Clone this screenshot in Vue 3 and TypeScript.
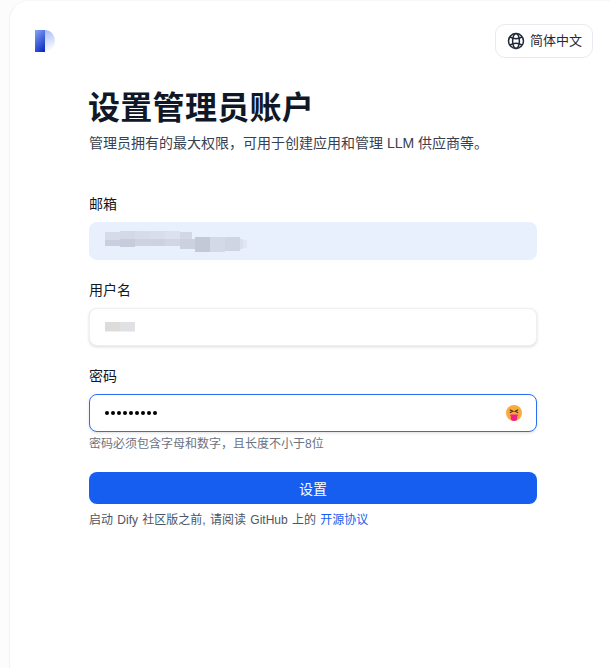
<script setup lang="ts">
interface Block {
  x: number
  y: number
  w: number
  h: number
  c: string
}

const emailBlur: Block[] = [
  { x: 0, y: 2, w: 15, h: 8, c: '#d5dbe9' },
  { x: 0, y: 10, w: 15, h: 6, c: '#c9cfde' },
  { x: 15, y: 1, w: 15, h: 8, c: '#d3d9e7' },
  { x: 15, y: 9, w: 15, h: 8, c: '#c6ccdb' },
  { x: 30, y: 1, w: 15, h: 8, c: '#d6dce9' },
  { x: 30, y: 9, w: 15, h: 7, c: '#cdd3e1' },
  { x: 45, y: 1, w: 15, h: 8, c: '#d8deeb' },
  { x: 45, y: 9, w: 15, h: 7, c: '#ccd2e0' },
  { x: 60, y: 1, w: 15, h: 8, c: '#dbe1ee' },
  { x: 60, y: 9, w: 15, h: 7, c: '#d0d6e4' },
  { x: 75, y: 2, w: 12, h: 7, c: '#d2d8e6' },
  { x: 75, y: 9, w: 15, h: 10, c: '#cbd1df' },
  { x: 90, y: 7, w: 15, h: 15, c: '#c4c9d9' },
  { x: 105, y: 7, w: 15, h: 15, c: '#d3d9e7' },
  { x: 120, y: 7, w: 15, h: 14, c: '#cfd5e3' },
  { x: 135, y: 9, w: 3, h: 10, c: '#d9dfec' },
  { x: 138, y: 10, w: 4, h: 8, c: '#e0e6f3' }
]

const nameBlur: Block[] = [
  { x: 0, y: 0, w: 15, h: 9, c: '#dedcdb' },
  { x: 15, y: 0, w: 15, h: 9, c: '#e0e1e4' },
  { x: 0, y: 9, w: 30, h: 1, c: '#f0f0f0' }
]
</script>

<template>
  <div class="page">
    <div class="card">
      <header class="top">
        <svg class="logo" width="21" height="22" viewBox="0 0 21 22" aria-label="logo">
          <defs>
            <linearGradient id="logo-dark" x1="0.2" y1="0" x2="0.7" y2="1">
              <stop offset="0" stop-color="#7e9df2" />
              <stop offset="1" stop-color="#0f2fc4" />
            </linearGradient>
            <linearGradient id="logo-light" x1="0.3" y1="0" x2="0.7" y2="1">
              <stop offset="0" stop-color="#9db5f6" />
              <stop offset="1" stop-color="#ffffff" />
            </linearGradient>
          </defs>
          <path d="M0 0h10a10 11 0 0 1 0 22H0z" fill="url(#logo-light)" />
          <rect width="10" height="22" fill="url(#logo-dark)" />
        </svg>
        <button class="lang" type="button">
          <svg width="18" height="18" viewBox="0 0 18 18" fill="none" stroke="#1f2937" stroke-width="1.5">
            <circle cx="9" cy="9" r="7.500" />
            <ellipse cx="9" cy="9" rx="3.400" ry="7.500" />
            <path d="M3 5c3.500 2 8.500 2 12 0M3 13c3.500-2 8.500-2 12 0" />
          </svg>
          <span>简体中文</span>
        </button>
      </header>

      <main class="content">
        <h1>设置管理员账户</h1>
        <p class="sub">管理员拥有的最大权限，可用于创建应用和管理 LLM 供应商等。</p>

        <form class="form" @submit.prevent>
          <div class="field">
            <label>邮箱</label>
            <div class="input filled">
              <svg width="148" height="22" viewBox="0 0 148 22">
                <rect v-for="(b, i) in emailBlur" :key="i" :x="b.x" :y="b.y" :width="b.w" :height="b.h" :fill="b.c" />
              </svg>
            </div>
          </div>

          <div class="field">
            <label>用户名</label>
            <div class="input raised">
              <svg width="30" height="10" viewBox="0 0 30 10">
                <rect v-for="(b, i) in nameBlur" :key="i" :x="b.x" :y="b.y" :width="b.w" :height="b.h" :fill="b.c" />
              </svg>
            </div>
          </div>

          <div class="field">
            <label>密码</label>
            <div class="input focused">
              <span class="dots">
                <i v-for="n in 9" :key="n"></i>
              </span>
              <svg class="emoji" width="18" height="18" viewBox="0 0 18 18">
                <circle cx="9" cy="9" r="8" fill="#fbab3c" />
                <path d="M4.800 5.800l3 1.500-3 1.500M13.200 5.800l-3 1.500 3 1.500" fill="none" stroke="#4a3320" stroke-width="1.200" />
                <path d="M5 10.500h8c0 .7-.3 1.200-.8 1.600v1.700a3.200 3.200 0 0 1-6.400 0v-1.700c-.5-.4-.8-.9-.8-1.600z" fill="#f0208a" />
              </svg>
            </div>
            <p class="hint">密码必须包含字母和数字，且长度不小于8位</p>
          </div>

          <button class="submit" type="submit">设置</button>
        </form>

        <p class="terms">启动 Dify 社区版之前, 请阅读 GitHub 上的 <a href="#">开源协议</a></p>
      </main>
    </div>
  </div>
</template>

<style>
html,
body {
  margin: 0;
  background: #fcfcfd;
}
</style>

<style scoped>
.page {
  height: 668px;
  overflow: hidden;
  padding-left: 9px;
  box-sizing: border-box;
  font-family: "Liberation Sans", "Noto Sans CJK SC", sans-serif;
  color: #1f2937;
}

.card {
  height: 690px;
  background: #fff;
  border-radius: 20px 0 0 20px;
  border-left: 1px solid #f2f2f4;
  border-top: 1px solid #f7f7f8;
  box-sizing: border-box;
}

.top {
  display: flex;
  justify-content: space-between;
  align-items: flex-start;
  padding: 23px 17px 0 25px;
}

.logo {
  margin-top: 6px;
}

.lang {
  display: flex;
  align-items: center;
  gap: 5px;
  height: 34px;
  width: 98px;
  padding: 0 0 0 11px;
  box-sizing: border-box;
  background: #fff;
  border: 1px solid #e8eaf0;
  border-radius: 10px;
  font: inherit;
  font-size: 13px;
  color: #1f2937;
}

.lang span {
  padding-bottom: 3px;
}

.content {
  width: 448px;
  margin-left: 79px;
  padding-top: 31px;
}

h1 {
  margin: 0 0 0 -1px;
  font-size: 32px;
  line-height: 38px;
  font-weight: 700;
  letter-spacing: 0.3px;
  color: #101828;
}

.sub {
  margin: 5px 0 0;
  font-size: 14px;
  line-height: 22px;
  color: #374151;
}

.form {
  margin-top: 40px;
  display: flex;
  flex-direction: column;
}

.field {
  margin-bottom: 20px;
}

.field label {
  display: block;
  font-size: 14px;
  line-height: 20px;
  margin-bottom: 8px;
  color: #111827;
}

.input {
  display: flex;
  align-items: center;
  justify-content: space-between;
  height: 38px;
  box-sizing: border-box;
  padding: 0 15px;
  border-radius: 8px;
}

.filled {
  background: #e8f0fe;
  padding-left: 16px;
}

.raised {
  background: #fff;
  border: 1px solid #f0f0f2;
  box-shadow: 0 1px 3px rgba(16, 24, 40, 0.16);
}

.focused {
  background: #fff;
  border: 1px solid #2a6ff3;
  box-shadow: 0 1px 3px rgba(16, 24, 40, 0.14);
  padding-right: 13px;
}

.dots {
  display: flex;
  gap: 2px;
}

.dots i {
  display: block;
  width: 4px;
  height: 4px;
  border-radius: 50%;
  background: #000;
}

.hint {
  margin: 3px 0 -1px;
  font-size: 12px;
  line-height: 18px;
  color: #6b7280;
}

.submit {
  height: 32px;
  background: #155eef;
  color: #fff;
  border: 0;
  border-radius: 8px;
  font: inherit;
  font-size: 14px;
}

.terms {
  margin: 7px 0 0;
  font-size: 12px;
  line-height: 18px;
  word-spacing: 1px;
  color: #4b5563;
}

.terms a {
  color: #155eef;
  text-decoration: none;
}
</style>
